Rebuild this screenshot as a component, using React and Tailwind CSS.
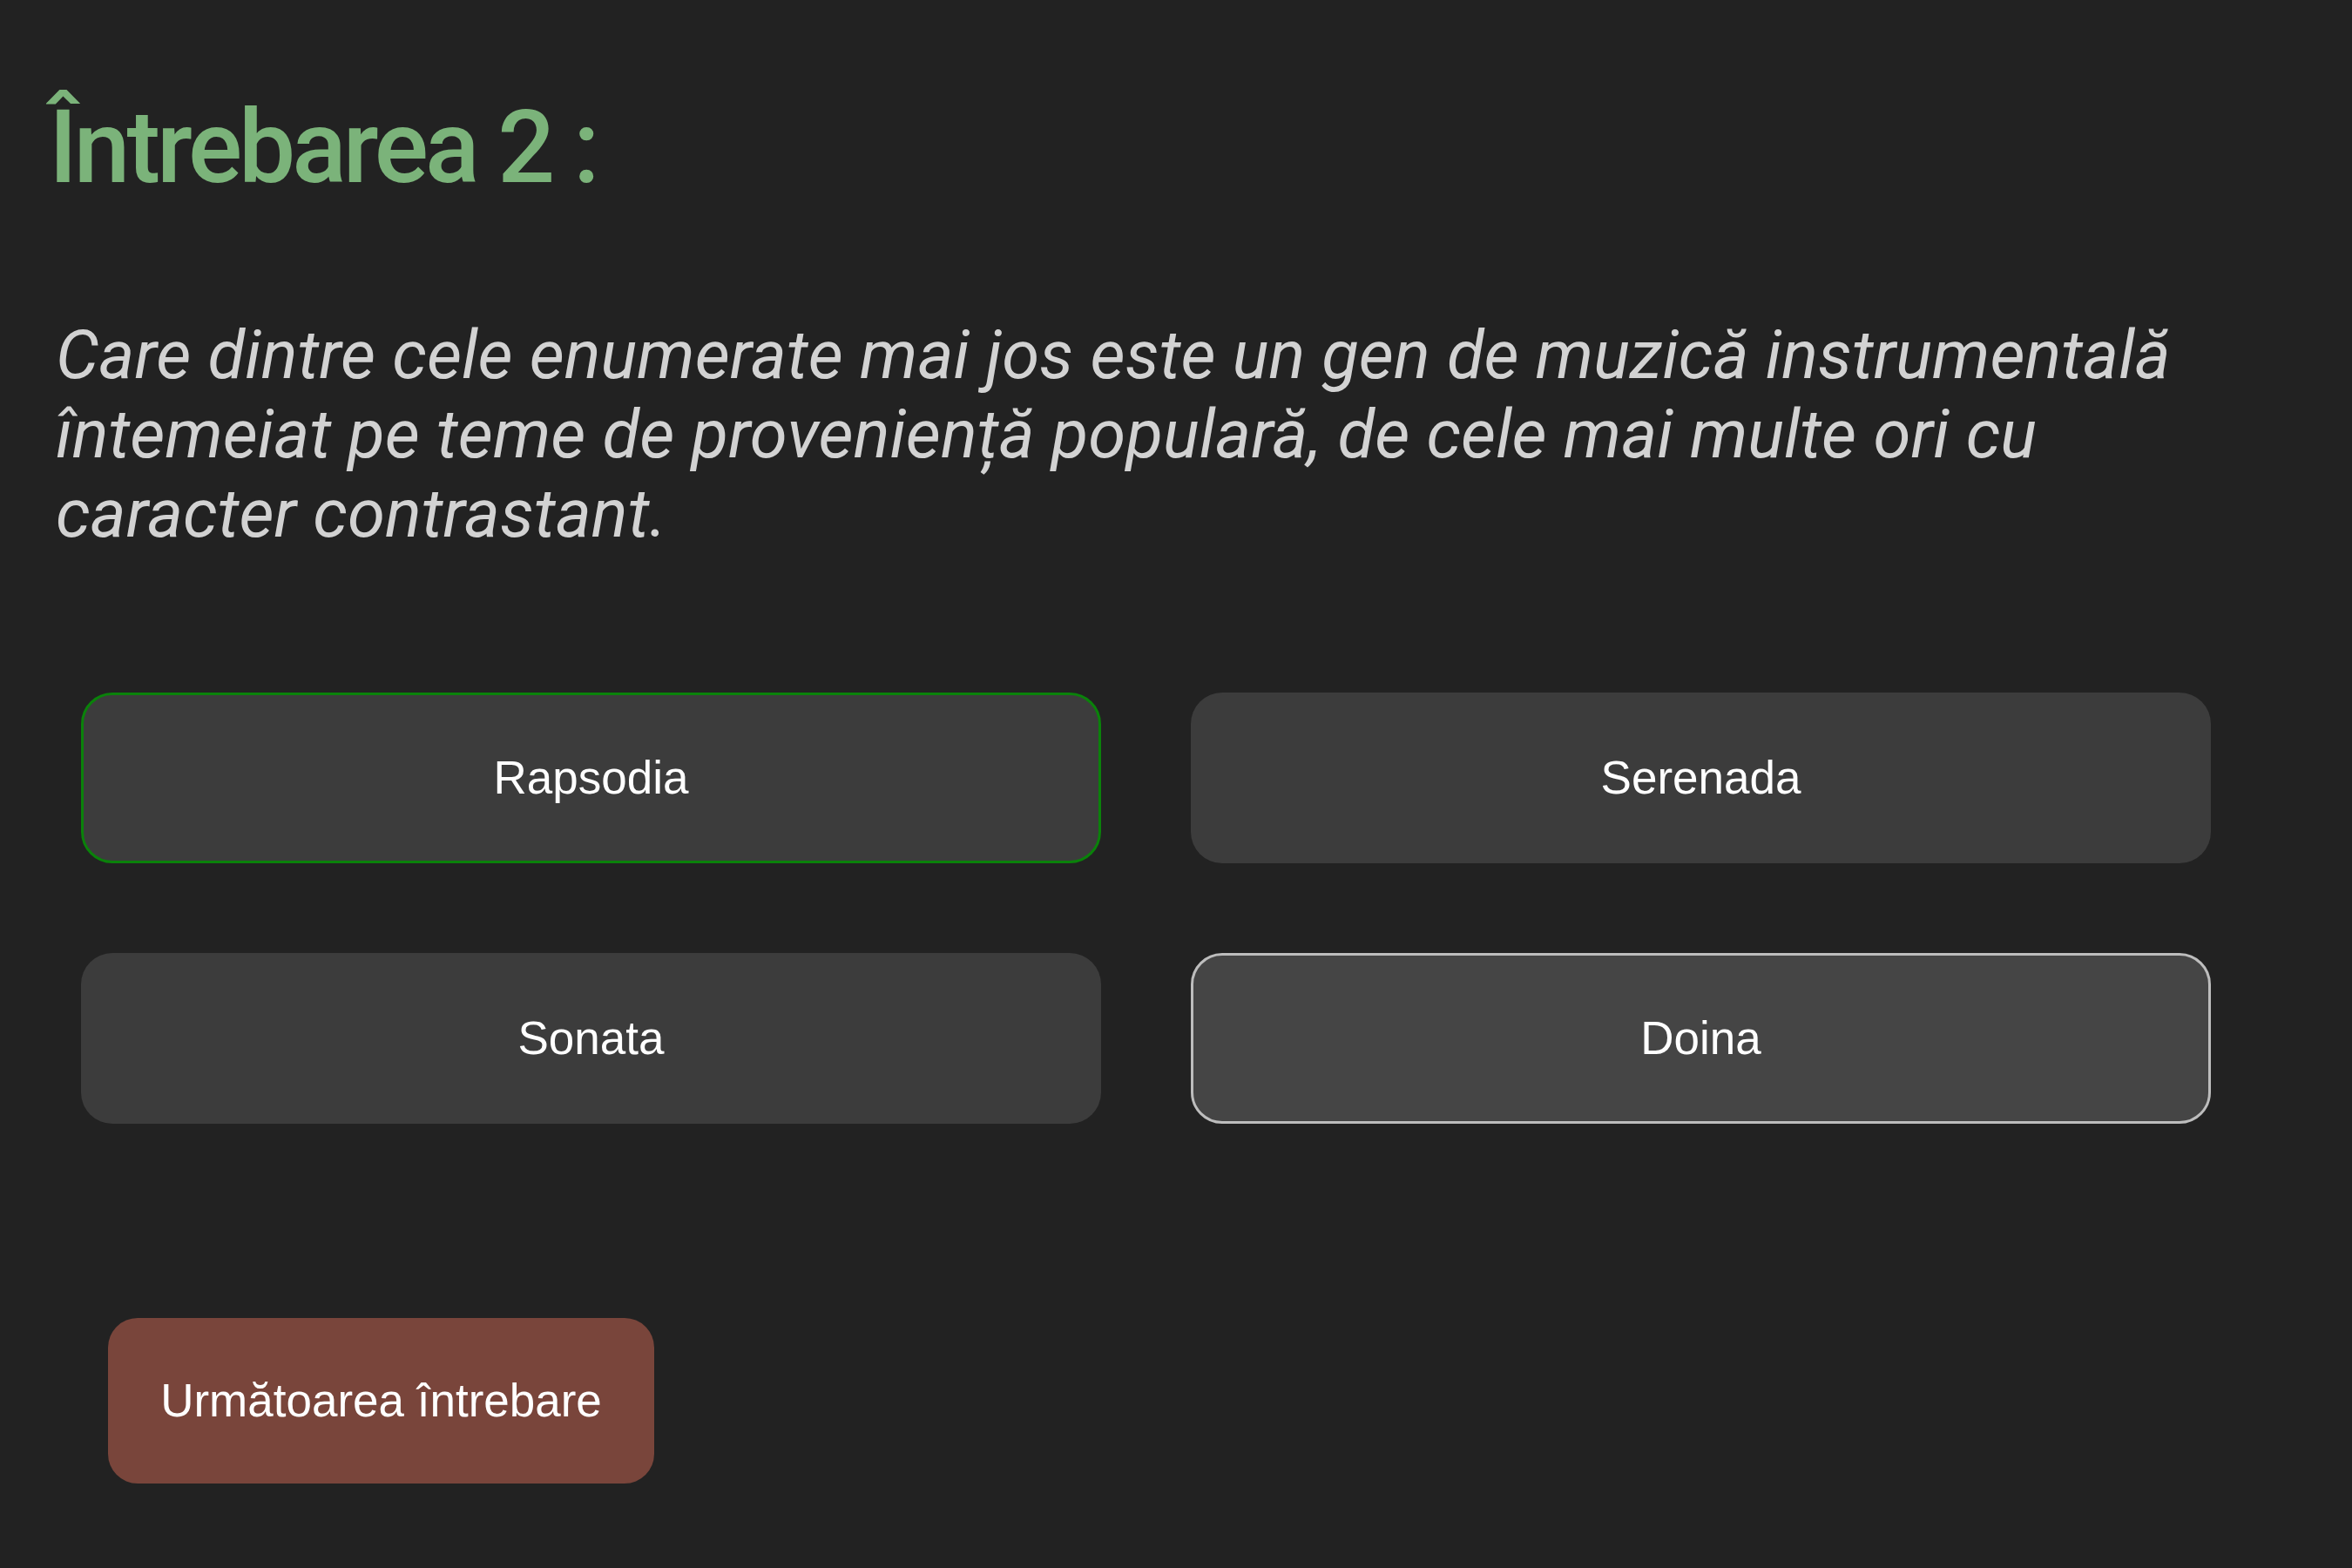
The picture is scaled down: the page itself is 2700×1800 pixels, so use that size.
import React, { useState } from 'react';

const options = [
  { label: 'Rapsodia', state: 'correct' },
  { label: 'Serenada', state: 'idle' },
  { label: 'Sonata', state: 'idle' },
  { label: 'Doina', state: 'hover' },
];

const optionStyles = {
  correct: 'bg-[#3c3c3c] border-[3px] border-[#0a820a]',
  idle: 'bg-[#3c3c3c] border-[3px] border-transparent',
  hover: 'bg-[#454545] border-[3px] border-[#bdbdbd]',
};

const App = () => {
  const [selected, setSelected] = useState(null);

  return (
    <div className="min-h-screen w-full bg-[#222222] font-['Roboto',sans-serif]">
      <div className="flex flex-col pt-[111px]">
        <h1 className="pl-[56px] text-[116px] leading-none font-medium tracking-[-4px] text-[#7bb37a]">
          Întrebarea 2 :
        </h1>

        <p className="mt-[135px] pl-[64px] w-[2610px] text-[78px] leading-[91px] italic text-[#d2d2d2]">
          Care dintre cele enumerate mai jos este un gen de muzică instrumentală întemeiat pe teme de proveniență populară, de cele mai multe ori cu caracter contrastant.
        </p>

        <div className="mt-[160px] ml-[93px] w-[2445px] grid grid-cols-2 gap-x-[103px] gap-y-[103px]">
          {options.map((opt) => (
            <button
              key={opt.label}
              onClick={() => setSelected(opt.label)}
              className={`h-[196px] rounded-[36px] flex items-center justify-center text-[53px] text-white font-['Liberation_Sans',Arial,sans-serif] ${optionStyles[opt.state]}`}
            >
              {opt.label}
            </button>
          ))}
        </div>

        <div className="mt-[223px] ml-[124px]">
          <button className="h-[190px] w-[627px] rounded-[34px] bg-[#79453b] text-[53px] text-white font-['Liberation_Sans',Arial,sans-serif]">
            Următoarea întrebare
          </button>
        </div>
      </div>
    </div>
  );
};

export default App;
